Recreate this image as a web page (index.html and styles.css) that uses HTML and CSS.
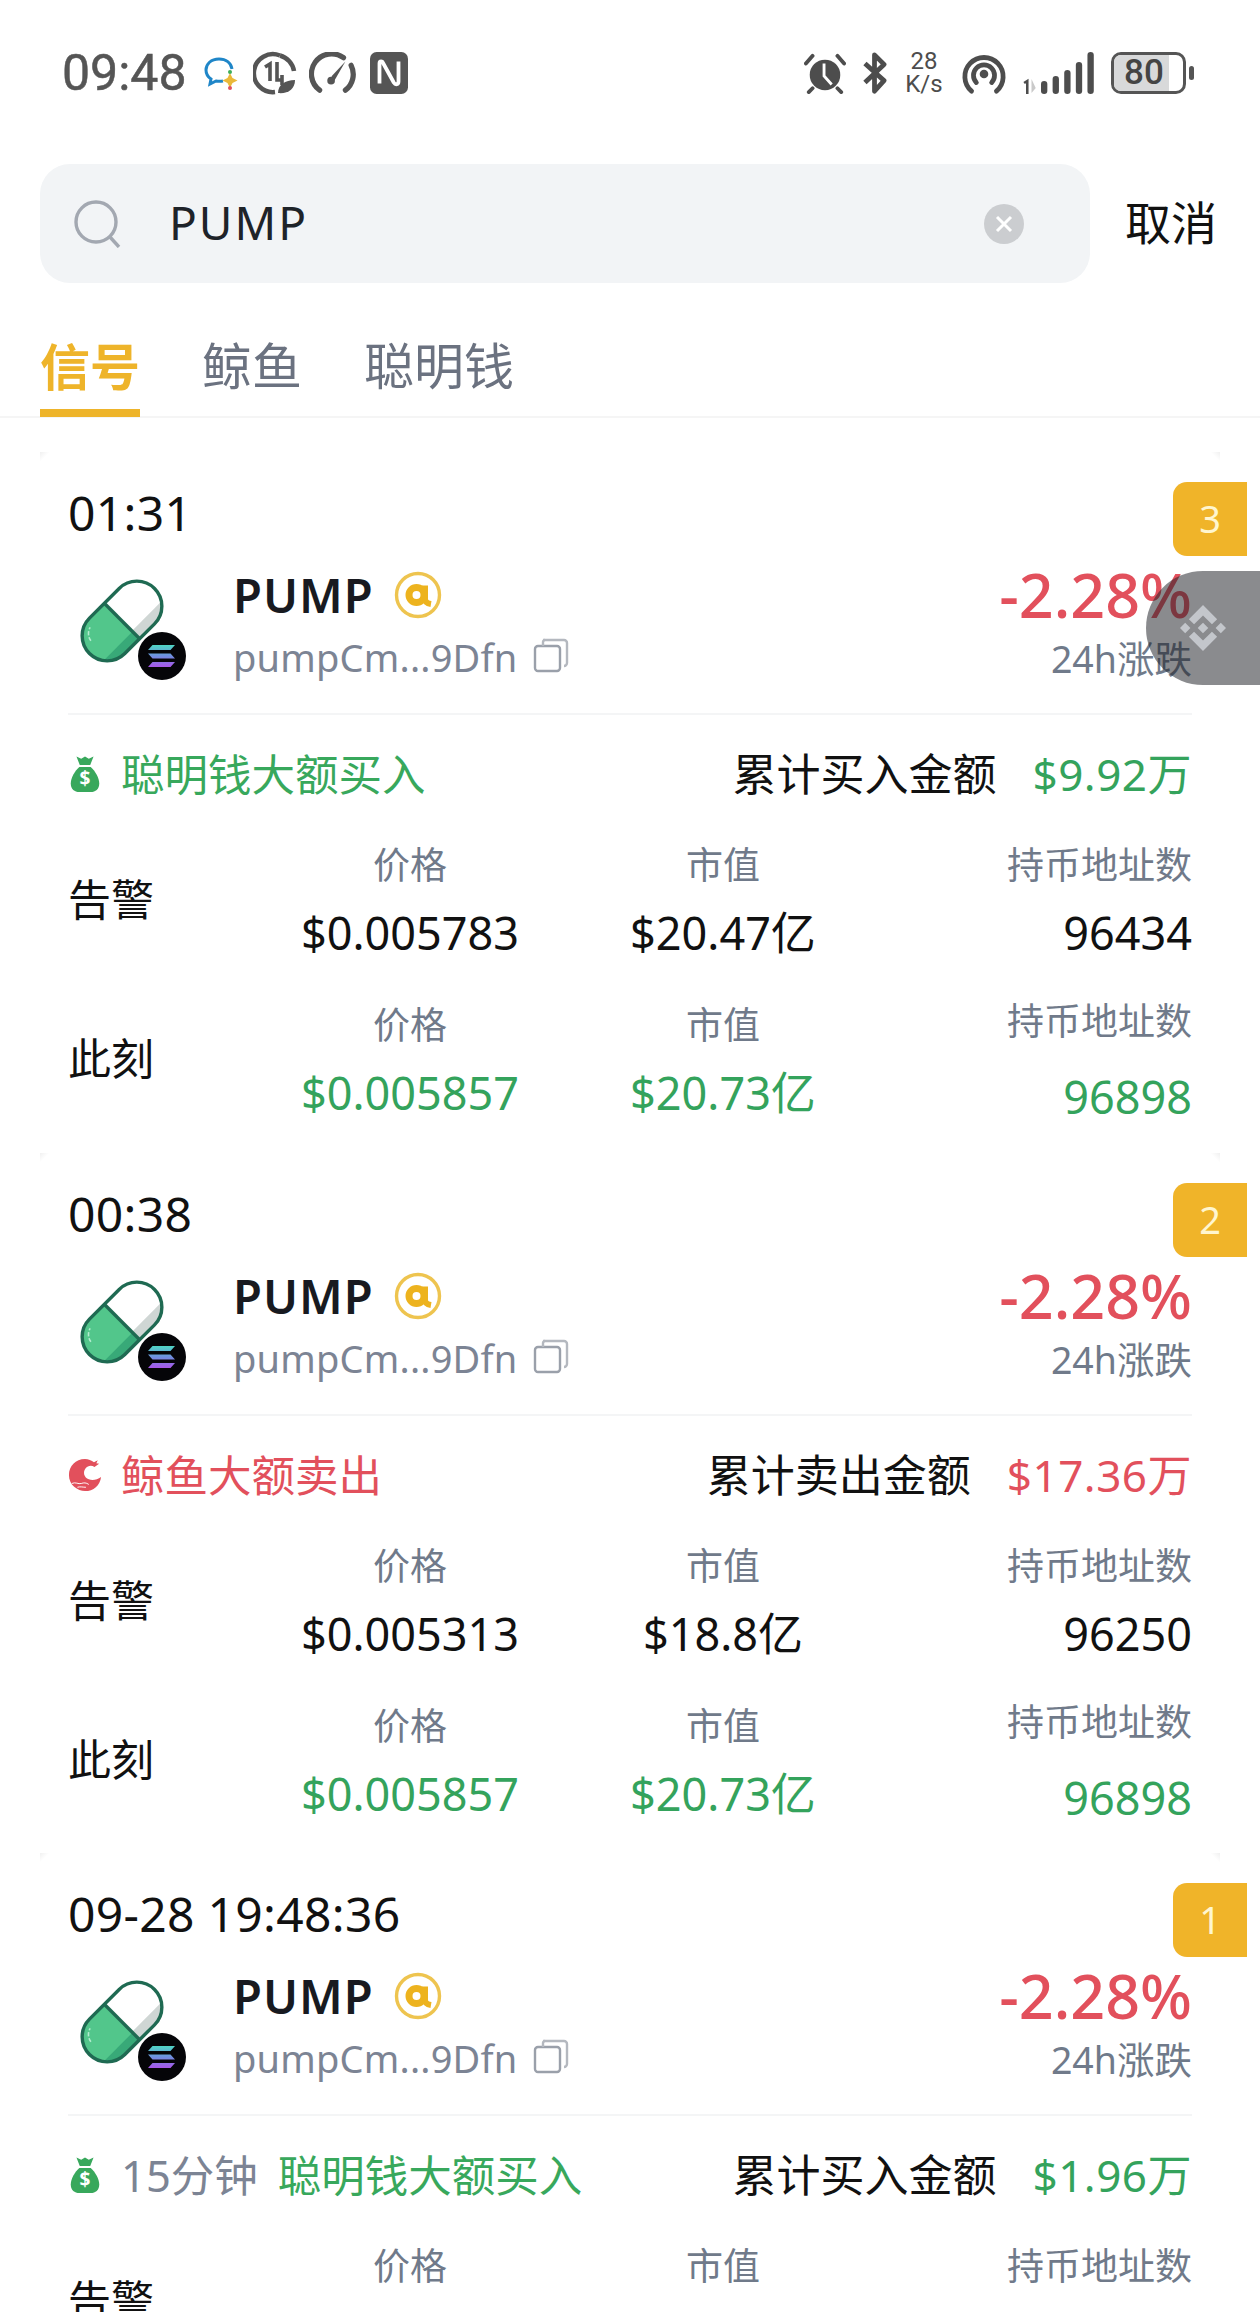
FILE: index.html
```html
<!DOCTYPE html>
<html lang="zh">
<head>
<meta charset="utf-8">
<title>PUMP</title>
<link rel="stylesheet" href="styles.css">
</head>
<body>
<svg class="defs" aria-hidden="true">
  <defs>
    <linearGradient id="sol" x1="0" y1="0" x2="0" y2="1">
      <stop offset="0" stop-color="#4fd6c4"/><stop offset=".5" stop-color="#6f8fe0"/><stop offset="1" stop-color="#a855e8"/>
    </linearGradient>
    <clipPath id="pillclip"><rect x="-46" y="-25" width="92" height="50" rx="25"/></clipPath>
    <symbol id="pill" viewBox="0 0 104 104">
      <g transform="translate(52 52) rotate(-45)">
        <g clip-path="url(#pillclip)">
          <rect x="-46" y="-25" width="46" height="50" fill="#52c68b"/>
          <rect x="-46" y="15" width="46" height="10" fill="#38a978"/>
          <rect x="0" y="-25" width="46" height="50" fill="#fff"/>
          <rect x="0" y="14" width="46" height="11" fill="#cfd6d4"/>
        </g>
        <path d="M-36 -8a12 12 0 0 1 9 -10" fill="none" stroke="#b4ecd0" stroke-width="1.6" stroke-dasharray="4 2"/>
        <rect x="-46" y="-25" width="92" height="50" rx="25" fill="none" stroke="#1f6a52" stroke-width="3.4"/>
        <path d="M0 -25V25" stroke="#1f6a52" stroke-width="3.4"/>
      </g>
    </symbol>
    <symbol id="solana" viewBox="0 0 48 48">
      <circle cx="24" cy="24" r="24" fill="#050508"/>
      <path d="M14.500 13H37L32.500 18H10Z M10 21.500H32.500L37 26.500H14.500Z M14.500 30H37L32.500 35H10Z" fill="url(#sol)"/>
    </symbol>
    <symbol id="alpha" viewBox="0 0 48 48">
      <circle cx="24" cy="24" r="21.500" fill="#fff" stroke="#eec44f" stroke-width="3.400"/>
      <circle cx="22.500" cy="24" r="7.500" fill="none" stroke="#edb31e" stroke-width="7"/>
      <path d="M31 14.500V28q0 4 6 5" fill="none" stroke="#edb31e" stroke-width="6"/>
    </symbol>
    <symbol id="copy" viewBox="0 0 36 36">
      <rect x="2" y="9" width="25" height="25" rx="3" fill="#fff" stroke="#9aa0aa" stroke-width="2.400"/>
      <path d="M10 3h21a3 3 0 0 1 3 3v20a3 3 0 0 1-3 3" fill="none" stroke="#b4b8bf" stroke-width="2.400"/>
      <path d="M10 9V5a2 2 0 0 1 2-2" fill="none" stroke="#b4b8bf" stroke-width="2.400"/>
    </symbol>
    <symbol id="bag" viewBox="0 0 32 40">
      <path d="M7 1.500l5 2.500 4-2.500 4 2.500 5-2.500-3.500 9h-11z" fill="#38a85c"/>
      <path d="M10 12.500h12C27 17 31 24 31 30c0 6-4 9-9 9H10c-5 0-9-3-9-9 0-6 4-13 9-17.500z" fill="#38a85c"/>
      <text x="16" y="32" class="bag-text">$</text>
    </symbol>
    <symbol id="whale" viewBox="0 0 36 36">
      <path d="M18 1C8 1 1 8.500 1 18c0 5 2 9.500 5.500 12.500C10 33.500 14 35 18 35c9 0 16-6 17-15-4 3-9 4-13 2.500-5-2-6.500-7.500-3.500-11.500 2.500-3 6.500-3.500 9.500-1.500l5-3.500-3 -.5 1.500-3-4 2C25 2.500 21.500 1 18 1z" fill="#e2505c"/>
      <path d="M4 27c4-2 7 1 10 0s5-1 8 1M10 31c3-1 6 0 9 0" fill="none" stroke="#fff" stroke-width="1"/>
    </symbol>
  </defs>
</svg>

<div class="page">
  <header class="status">
    <div class="status-left">
      <span class="clock">09:48</span>
      <svg class="si si-chat" viewBox="0 0 36 36"><path d="M16 4C8 4 3 9 3 15c0 4 2 7 5 9l-1 5 6-3c2 .4 5 .4 7 0" fill="none" stroke="#1f86c8" stroke-width="3"/><path d="M16 4c7 0 12 4 13 10" fill="none" stroke="#1f86c8" stroke-width="3"/><path d="M27 18l2.500 5 5 2.500-5 2.500-2.500 5-2.500-5-5-2.500 5-2.500z" fill="#eab839"/><circle cx="27" cy="17" r="2" fill="#3fae5a"/><circle cx="27" cy="33" r="2" fill="#e2505c"/></svg>
      <svg class="si si-round" viewBox="0 0 44 44"><path d="M27 4.500A19 19 0 1 0 22 41" fill="none" stroke="#555" stroke-width="4.500"/><path d="M27 4.500A19 19 0 0 1 41 20" fill="none" stroke="#555" stroke-width="4.500"/><path d="M12 16l5-3v17M24 11v18h5M29 24v10" fill="none" stroke="#555" stroke-width="3.600"/><path d="M25 42c0-8 7-13 17-13 0 9-7 14-17 13z" fill="#555"/></svg>
      <svg class="si si-gauge" viewBox="0 0 50 44"><path d="M11 40A21 21 0 0 1 36 6" fill="none" stroke="#555" stroke-width="5.500" stroke-linecap="round"/><path d="M44 14A21 21 0 0 1 38 40" fill="none" stroke="#555" stroke-width="5.500" stroke-linecap="round"/><path d="M38 10L24 25l-3 7 6-3z" fill="#555"/><circle cx="23" cy="30" r="4" fill="#555"/></svg>
      <svg class="si si-nfc" viewBox="0 0 40 44"><rect width="40" height="44" rx="7" fill="#555"/><path d="M10 33V12c0-3 3-3 4 0l11 20c2 3 5 2 5-1V10" fill="none" stroke="#fff" stroke-width="4"/></svg>
    </div>
    <div class="status-right">
      <svg class="si si-alarm" viewBox="0 0 44 44"><circle cx="22" cy="24" r="16" fill="#4d4d4d"/><path d="M2 12L9 4M42 12L35 4M9 38l-4 4M35 38l4 4" stroke="#4d4d4d" stroke-width="4" stroke-linecap="round"/><path d="M21 12v13l8 9" fill="none" stroke="#fff" stroke-width="3"/></svg>
      <svg class="si si-bt" viewBox="0 0 28 44"><path d="M4 12L24 30 14 41V3l10 10L4 32" fill="none" stroke="#4d4d4d" stroke-width="5" stroke-linejoin="round"/></svg>
      <div class="speed"><span>28</span><span>K/s</span></div>
      <svg class="si si-hot" viewBox="0 0 46 46"><path d="M10 42A20 20 0 1 1 36 42" fill="none" stroke="#4d4d4d" stroke-width="5" stroke-linecap="round"/><path d="M15 33A11 11 0 1 1 31 33" fill="none" stroke="#4d4d4d" stroke-width="5" stroke-linecap="round"/><circle cx="23" cy="24" r="4.500" fill="#4d4d4d"/></svg>
      <svg class="si si-signal" viewBox="0 0 72 44" preserveAspectRatio="none"><path d="M2 32l3-2v13" fill="none" stroke="#4d4d4d" stroke-width="2.400"/><path d="M9 28v14l4-5z" fill="#c9c9c9"/><g fill="#4d4d4d"><rect x="18" y="30" width="6" height="13" rx="3"/><rect x="29" y="25" width="6" height="18" rx="3"/><rect x="40" y="19" width="6" height="24" rx="3"/><rect x="51" y="11" width="6" height="32" rx="3"/><rect x="62" y="1" width="6" height="42" rx="3"/></g></svg>
      <div class="battery"><div class="battery-body"><div class="battery-fill"></div><span class="battery-num">80</span></div><div class="battery-nub"></div></div>
    </div>
  </header>

  <div class="search-row">
    <div class="search">
      <svg class="search-icon" viewBox="0 0 48 48"><circle cx="22" cy="22" r="20" fill="none" stroke="#a3a8b1" stroke-width="3.400"/><path d="M36 37l9 10" stroke="#a3a8b1" stroke-width="3.400"/></svg>
      <span class="search-text">PUMP</span>
      <svg class="search-clear" viewBox="0 0 40 40"><circle cx="20" cy="20" r="20" fill="#cbcdd0"/><path d="M13 13l14 14M27 13L13 27" stroke="#fff" stroke-width="3"/></svg>
    </div>
    <span class="cancel">取消</span>
  </div>

  <nav class="tabs">
    <span class="tab tab-on">信号</span>
    <span class="tab">鲸鱼</span>
    <span class="tab">聪明钱</span>
  </nav>

  <main class="cards">
    <article class="card">
      <span class="rank">3</span>
      <div class="time">01:31</div>
      <div class="token">
        <div class="logo"><svg class="logo-pill"><use href="#pill"/></svg><svg class="logo-chain"><use href="#solana"/></svg></div>
        <div class="token-main">
          <div class="token-name"><span class="name">PUMP</span><svg class="alpha"><use href="#alpha"/></svg></div>
          <div class="token-addr"><span>pumpCm...9Dfn</span><svg class="copy"><use href="#copy"/></svg></div>
        </div>
        <div class="token-change"><div class="pct">-2.28%</div><div class="pct-label">24h涨跌</div></div>
      </div>
      <div class="signal">
        <div class="signal-left up"><svg class="sig-icon"><use href="#bag"/></svg><span>聪明钱大额买入</span></div>
        <div class="signal-right"><span class="total">累计买入金额</span><span class="amount up">$9.92万</span></div>
      </div>
      <div class="stats">
        <div class="stat-title">告警</div>
        <div class="cell"><div class="lbl">价格</div><div class="val">$0.005783</div></div>
        <div class="cell"><div class="lbl">市值</div><div class="val">$20.47亿</div></div>
        <div class="cell cell-end"><div class="lbl">持币地址数</div><div class="val">96434</div></div>
      </div>
      <div class="stats stats-now">
        <div class="stat-title">此刻</div>
        <div class="cell"><div class="lbl">价格</div><div class="val up">$0.005857</div></div>
        <div class="cell"><div class="lbl">市值</div><div class="val up">$20.73亿</div></div>
        <div class="cell cell-end"><div class="lbl">持币地址数</div><div class="val up">96898</div></div>
      </div>
    </article>

    <article class="card">
      <span class="rank">2</span>
      <div class="time">00:38</div>
      <div class="token">
        <div class="logo"><svg class="logo-pill"><use href="#pill"/></svg><svg class="logo-chain"><use href="#solana"/></svg></div>
        <div class="token-main">
          <div class="token-name"><span class="name">PUMP</span><svg class="alpha"><use href="#alpha"/></svg></div>
          <div class="token-addr"><span>pumpCm...9Dfn</span><svg class="copy"><use href="#copy"/></svg></div>
        </div>
        <div class="token-change"><div class="pct">-2.28%</div><div class="pct-label">24h涨跌</div></div>
      </div>
      <div class="signal">
        <div class="signal-left down"><svg class="sig-icon"><use href="#whale"/></svg><span>鲸鱼大额卖出</span></div>
        <div class="signal-right"><span class="total">累计卖出金额</span><span class="amount down">$17.36万</span></div>
      </div>
      <div class="stats">
        <div class="stat-title">告警</div>
        <div class="cell"><div class="lbl">价格</div><div class="val">$0.005313</div></div>
        <div class="cell"><div class="lbl">市值</div><div class="val">$18.8亿</div></div>
        <div class="cell cell-end"><div class="lbl">持币地址数</div><div class="val">96250</div></div>
      </div>
      <div class="stats stats-now">
        <div class="stat-title">此刻</div>
        <div class="cell"><div class="lbl">价格</div><div class="val up">$0.005857</div></div>
        <div class="cell"><div class="lbl">市值</div><div class="val up">$20.73亿</div></div>
        <div class="cell cell-end"><div class="lbl">持币地址数</div><div class="val up">96898</div></div>
      </div>
    </article>

    <article class="card">
      <span class="rank">1</span>
      <div class="time">09-28 19:48:36</div>
      <div class="token">
        <div class="logo"><svg class="logo-pill"><use href="#pill"/></svg><svg class="logo-chain"><use href="#solana"/></svg></div>
        <div class="token-main">
          <div class="token-name"><span class="name">PUMP</span><svg class="alpha"><use href="#alpha"/></svg></div>
          <div class="token-addr"><span>pumpCm...9Dfn</span><svg class="copy"><use href="#copy"/></svg></div>
        </div>
        <div class="token-change"><div class="pct">-2.28%</div><div class="pct-label">24h涨跌</div></div>
      </div>
      <div class="signal">
        <div class="signal-left up"><svg class="sig-icon"><use href="#bag"/></svg><span class="period">15分钟</span><span>聪明钱大额买入</span></div>
        <div class="signal-right"><span class="total">累计买入金额</span><span class="amount up">$1.96万</span></div>
      </div>
      <div class="stats">
        <div class="stat-title">告警</div>
        <div class="cell"><div class="lbl">价格</div></div>
        <div class="cell"><div class="lbl">市值</div></div>
        <div class="cell cell-end"><div class="lbl">持币地址数</div></div>
      </div>
    </article>
  </main>

  <div class="float-btn">
    <svg class="float-logo" viewBox="0 0 126.610 126.610"><path d="M38.730 53.200l24.590-24.580 24.600 24.600 14.300-14.310L63.320 0 24.430 38.900zM0 63.310l14.300-14.310 14.310 14.310-14.310 14.300zM38.730 73.410l24.590 24.590 24.600-24.600 14.310 14.290-38.900 38.910-38.910-38.880-.02-.02zM98.010 63.310l14.300-14.310 14.310 14.300-14.310 14.320zM77.830 63.300L63.320 48.780 52.590 59.510l-1.240 1.230-2.540 2.540 14.510 14.500 14.510-14.470z" fill="#c3c6cb"/></svg>
  </div>
</div>
</body>
</html>
```

FILE: styles.css
```css
* { box-sizing: border-box; }
html, body { margin: 0; padding: 0; background: #fff; }
body {
  font-family: "Noto Sans", "Noto Sans CJK SC", sans-serif;
  color: #1e2329;
}
.defs { position: absolute; width: 0; height: 0; }
.bag-text { font: 700 20px "Noto Sans", sans-serif; fill: #fff; text-anchor: middle; }

.page {
  position: relative;
  width: 1260px;
  height: 2312px;
  overflow: hidden;
}

/* status bar */
.status {
  height: 164px;
  padding: 50px 66px 0 62px;
  display: flex;
  justify-content: space-between;
  align-items: flex-start;
}
.status-left, .status-right { display: flex; align-items: center; height: 46px; }
.clock {
  font: 400 50px/46px Roboto, sans-serif;
  color: #555;
  -webkit-text-stroke: 0.5px #555;
}
.si { display: block; flex: none; }
.si-chat { width: 36px; height: 36px; margin-left: 16px; }
.si-round { width: 44px; height: 44px; margin-left: 14px; }
.si-gauge { width: 48px; height: 42px; margin-left: 12px; }
.si-nfc { width: 38px; height: 42px; margin-left: 13px; }
.si-alarm { width: 42px; height: 42px; }
.si-bt { width: 27px; height: 42px; margin-left: 15px; }
.speed {
  margin-left: 16px;
  width: 40px;
  display: flex;
  flex-direction: column;
  align-items: center;
  font: 400 24px/23px Roboto, sans-serif;
  color: #4d4d4d;
}
.si-hot { width: 46px; height: 44px; margin-left: 17px; }
.si-signal { width: 76px; height: 44px; margin-left: 15px; }
.battery { display: flex; align-items: center; margin-left: 13px; }
.battery-body {
  position: relative;
  width: 75px;
  height: 42px;
  border: 3px solid #555;
  border-radius: 10px;
  overflow: hidden;
  display: flex;
  align-items: center;
  justify-content: center;
  padding-right: 9px;
}
.battery-fill { position: absolute; left: 0; top: 0; bottom: 0; width: 80%; background: #d8d9da; }
.battery-num { position: relative; font: 500 35px/36px Roboto, sans-serif; color: #444; }
.battery-nub { width: 5px; height: 14px; margin-left: 3px; background: #555; border-radius: 3px; }

/* search */
.search-row {
  display: flex;
  align-items: center;
  padding: 0 43px 0 40px;
  justify-content: space-between;
}
.search {
  width: 1050px;
  height: 119px;
  background: #f2f4f6;
  border-radius: 30px;
  display: flex;
  align-items: center;
  padding: 0 66px 0 34px;
}
.search-icon { width: 48px; height: 48px; flex: none; }
.search-text {
  margin-left: 47px;
  font-size: 46px;
  line-height: 60px;
  letter-spacing: 2px;
  color: #1e2329;
  flex: 1;
  padding-bottom: 4px;
}
.search-clear { width: 40px; height: 40px; flex: none; }
.cancel { font-size: 46px; line-height: 60px; color: #111; padding-bottom: 4px; }

/* tabs */
.tabs {
  height: 135px;
  padding: 0 40px;
  display: flex;
  align-items: flex-end;
  gap: 62px;
  border-bottom: 2px solid #f5f5f5;
}
.tab {
  height: 100px;
  font-size: 50px;
  line-height: 100px;
  color: #6b7280;
}
.tab-on {
  color: #eeb42a;
  font-weight: 700;
  border-bottom: 8px solid #eeb42a;
  margin-bottom: -1px;
}

/* cards */
.cards { padding: 34px 40px 0; }
.card {
  position: relative;
  height: 700.700px;
  padding: 31px 28px 0;
}
.card::before, .card::after {
  content: "";
  position: absolute;
  top: 0;
  width: 10px;
  height: 10px;
}
.card::before { left: 0; background: linear-gradient(135deg, #f0f0f0 0, #fff 50%); }
.card::after { right: 0; background: linear-gradient(225deg, #f0f0f0 0, #fff 50%); }
.rank {
  position: absolute;
  top: 30px;
  right: -27px;
  width: 74px;
  height: 74px;
  border-radius: 14px 0 0 14px;
  background: #f0b429;
  color: #fff6cf;
  font-size: 38px;
  line-height: 72px;
  text-align: center;
}
.time { font-size: 48px; line-height: 60px; color: #111; letter-spacing: 0.3px; }
.token {
  display: flex;
  align-items: flex-start;
  height: 172px;
  padding-top: 21px;
  border-bottom: 2px solid #f4f5f6;
}
.logo { position: relative; width: 165px; height: 120px; flex: none; }
.logo-pill { position: absolute; left: 2px; top: 5px; width: 104px; height: 104px; }
.logo-chain { position: absolute; left: 70px; top: 68px; width: 48px; height: 48px; }
.token-main { flex: 1; }
.token-name { display: flex; align-items: center; height: 62px; }
.name { font-size: 47px; font-weight: 600; letter-spacing: 1px; color: #181a20; line-height: 62px; }
.alpha { width: 48px; height: 48px; margin-left: 20px; }
.token-addr {
  display: flex;
  align-items: center;
  height: 62px;
  font-size: 38px;
  letter-spacing: 0.2px;
  color: #7c8494;
}
.copy { width: 36px; height: 36px; margin-left: 15px; margin-top: -4px; }
.token-change { text-align: right; }
.pct { font-size: 61px; font-weight: 500; line-height: 62px; color: #e2505c; }
.pct-label { font-size: 37.500px; line-height: 66px; color: #707a8a; }

.signal {
  margin-top: 29px;
  height: 60px;
  display: flex;
  justify-content: space-between;
  align-items: center;
  font-size: 44px;
  line-height: 60px;
}
.signal-left, .signal-right { display: flex; align-items: center; }
.signal-left { font-size: 43.500px; }
.sig-icon { width: 34px; height: 38px; margin-right: 19px; flex: none; }
.period { color: #7c8494; margin-right: 20px; }
.total { color: #111; }
.amount { margin-left: 36px; letter-spacing: 0.5px; }
.up { color: #34a35c; }
.signal-left.up { color: #38a85c; }
.down { color: #e2505c; }

.stats {
  margin-top: 36px;
  min-height: 123px;
  display: grid;
  grid-template-columns: 172px 340px 286px 326px;
  align-items: start;
}
.stats-now { margin-top: 37px; }
.stat-title { font-size: 43px; line-height: 60px; color: #111; align-self: center; padding-bottom: 3px; height: 63px; }
.stats-now .stat-title { padding-bottom: 5px; height: 65px; }
.cell { text-align: center; }
.cell-end { text-align: right; }
.lbl { font-size: 37px; line-height: 50px; color: #707a8a; white-space: nowrap; }
.val { margin-top: 13px; font-size: 45px; line-height: 60px; font-weight: 400; color: #111; white-space: nowrap; }
.val.up { color: #34a35c; }
.stats-now .cell-end .lbl { margin-top: -4px; }
.stats-now .cell-end .val { margin-top: 21px; margin-bottom: -4px; }

/* floating button */
.float-btn {
  position: absolute;
  left: 1146px;
  top: 571px;
  width: 114px;
  height: 114px;
  border-radius: 57px 0 0 57px;
  background: rgba(30, 33, 38, 0.52);
  display: flex;
  align-items: center;
  justify-content: center;
}
.float-logo { width: 46px; height: 46px; }
```
